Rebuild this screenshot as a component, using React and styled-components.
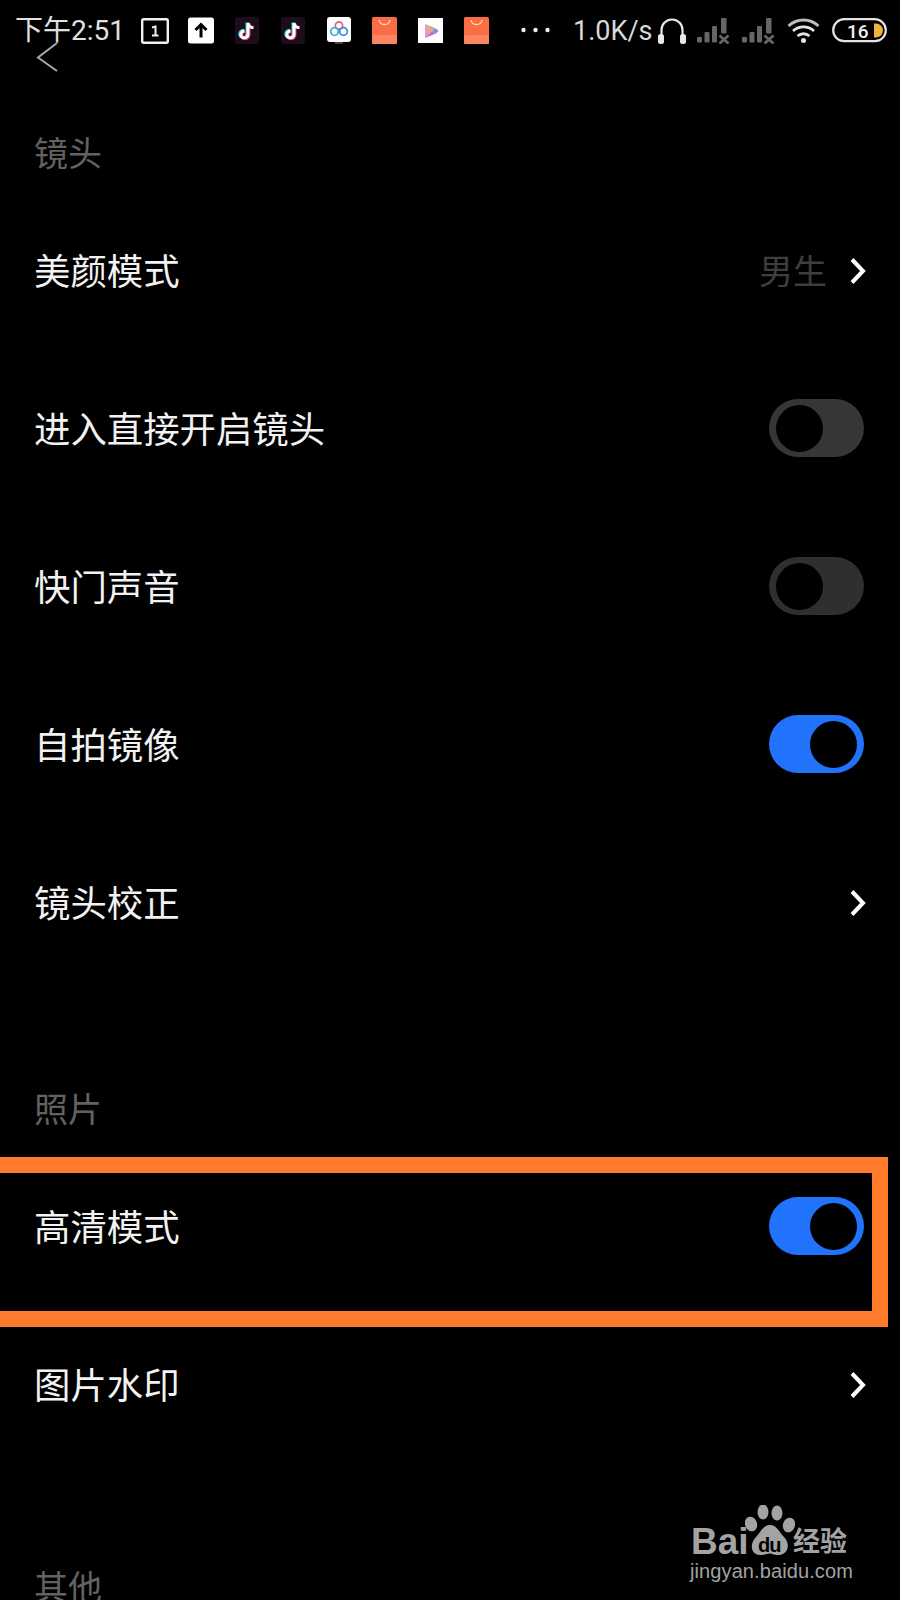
import React from 'react';
import styled, { createGlobalStyle } from 'styled-components';

const Global = createGlobalStyle`
  html, body { margin: 0; padding: 0; background: #000; }
  body { width: 900px; height: 1600px; overflow: hidden; font-family: "Roboto", "Noto Sans CJK SC", sans-serif; }
`;
const Page = styled.div`
  position: relative; width: 900px; height: 1600px; overflow: hidden; background: #000; color: #fff;
`;
const StatusBar = styled.div`
  display: flex; align-items: center; height: 60px; padding-left: 15px; color: #e4e4e4;
`;
const Clock = styled.span`
  font-size: 28px; line-height: 60px; width: 126px; margin-top: 2px; white-space: nowrap; color: #e0e0e0;
`;
const Tile = styled.svg`
  display: block; flex: none; width: ${p => p.$w || 26}px; height: 27px; margin-right: ${p => p.$mr ?? 20}px;
`;
const Speed = styled.span`
  font-size: 27px; line-height: 60px; width: 85px; margin-top: 2px; white-space: nowrap; color: #d8d8d8;
`;
const BackIcon = styled.svg`
  position: absolute; left: 36px; top: 40px; width: 24px; height: 34px;
`;
const SectionLabel = styled.div`
  font-size: 34px; line-height: 50px; color: #626262; padding-left: 34px; margin-top: ${p => p.$mt}px; margin-bottom: ${p => p.$mb}px;
`;
const Row = styled.div`
  position: relative; display: flex; align-items: center; justify-content: space-between; height: 158px; padding: 0 36px 0 34px;
`;
const RowTitle = styled.span`
  font-size: 36.4px; line-height: 50px; color: #f2f2f2; white-space: nowrap;
`;
const Trail = styled.div`
  display: flex; align-items: center; gap: 22px;
`;
const Value = styled.span`
  font-size: 34px; color: #3e3e3e; line-height: 50px; margin-top: -3px;
`;
const Chevron = styled.svg`
  display: block; width: 18px; height: 30px; margin: -5px -3px 0 0;
`;
const Track = styled.div`
  display: flex; align-items: center; justify-content: ${p => (p.$on ? 'flex-end' : 'flex-start')};
  width: 95px; height: 58px; box-sizing: border-box; padding: 0 7px; border-radius: 29px; margin-top: -6px;
  background: ${p => (p.$on ? '#2273fb' : p.$dim ? '#2f2f2f' : '#363636')};
`;
const Knob = styled.div`
  width: 47px; height: 47px; border-radius: 50%; background: #000;
`;
const Highlight = styled.div`
  position: absolute; left: -20px; top: 1157px; width: 908px; height: 170px; box-sizing: border-box;
  border: 16px solid #ff7a2b; pointer-events: none;
`;
const Watermark = styled.div`
  position: absolute; left: 690px; top: 1505px; width: 165px; height: 84px; color: #a3a3a3;
`;
const Paw = styled.svg`
  position: absolute; left: 55px; top: 0; width: 50px; height: 52px;
`;
const Bai = styled.span`
  position: absolute; left: 1px; top: 16px; font: bold 37px/42px "Liberation Sans", sans-serif;
`;
const Du = styled.span`
  position: absolute; left: 68px; top: 29px; font: bold 20px/22px "Liberation Sans", sans-serif; color: #000; letter-spacing: -1px;
`;
const Jingyan = styled.span`
  position: absolute; left: 103px; top: 17px; font: bold 27px/36px "Noto Sans CJK SC", sans-serif; white-space: nowrap;
`;
const Domain = styled.span`
  position: absolute; left: 0; top: 52px; font: 20px/28px "Liberation Sans", sans-serif; white-space: nowrap; letter-spacing: 0.1px;
`;

const Toggle = ({ on, dim }) => <Track $on={on} $dim={dim}><Knob /></Track>;
const Arrow = () => (
  <Chevron viewBox="0 0 18 30"><path d="M3 3.500 L14 15 L3 26.500" fill="none" stroke="#fff" strokeWidth="4" /></Chevron>
);
const TikTok = ({ mr }) => (
  <Tile $w={24} $mr={mr} viewBox="0 0 24 27">
    <rect width="24" height="27" rx="3" fill="#1c0c1c" />
    <path d="M13 6 V17.500 A3.600 3.600 0 1 1 9.400 13.900" fill="none" stroke="#27d8e0" strokeWidth="3.400" transform="translate(-.8 -.4)" />
    <path d="M13 6 V17.500 A3.600 3.600 0 1 1 9.400 13.900" fill="none" stroke="#f02a5c" strokeWidth="3.400" transform="translate(.8 .4)" />
    <path d="M13 6 V17.500 A3.600 3.600 0 1 1 9.400 13.900 M13 6 C13.600 9 15.500 10.500 18.500 10.800" fill="none" stroke="#fff" strokeWidth="3" />
  </Tile>
);
const Bag = ({ mr }) => (
  <Tile $w={25} $mr={mr} viewBox="0 0 25 27">
    <rect width="25" height="27" rx="1.500" fill="#fb6e45" />
    <rect y="18" width="25" height="9" rx="1.500" fill="#fb8560" />
    <path d="M7 3 C8 9 17 9 18 3" fill="none" stroke="#ffd9c8" strokeWidth="1.300" />
  </Tile>
);
const Signal = ({ mr }) => (
  <Tile $w={33} $mr={mr} viewBox="0 0 33 27">
    <g fill="#666">
      <rect x="0" y="20" width="5" height="5.500" rx="1" />
      <rect x="7.500" y="15" width="5" height="10.500" rx="1" />
      <rect x="15" y="9" width="5" height="16.500" rx="1" />
      <rect x="24" y="1" width="5.500" height="15.500" rx="1" />
    </g>
    <path d="M22.500 18.500 L31.500 26.500 M31.500 18.500 L22.500 26.500" stroke="#666" strokeWidth="2.800" />
  </Tile>
);

export default function App() {
  return (
    <Page>
      <Global />
      <StatusBar>
        <Clock>下午2:51</Clock>
        <Tile $w={28} $mr={19} viewBox="0 0 28 27">
          <rect x="1.200" y="2.200" width="25.600" height="23.600" rx="1.500" fill="none" stroke="#f0f0f0" strokeWidth="2.400" />
          <path d="M11 10.500 L14.500 9.500 V18.500 M11 18.500 H17.500" fill="none" stroke="#f0f0f0" strokeWidth="2" />
        </Tile>
        <Tile $w={26} $mr={21} viewBox="0 0 26 27">
          <rect width="26" height="26" y=".5" rx="2.500" fill="#fff" />
          <path d="M13 20.500 V8 M7.500 13 L13 7.500 L18.500 13" fill="none" stroke="#000" strokeWidth="3" />
        </Tile>
        <TikTok mr={22} />
        <TikTok mr={22} />
        <Tile $w={24} $mr={21} viewBox="0 0 24 27">
          <rect width="24" height="25" rx="3" fill="#fff" />
          <rect x="8" y="25" width="8" height="2" fill="#444" />
          <circle cx="12" cy="8.500" r="3.600" fill="none" stroke="#e75c7c" strokeWidth="1.700" />
          <circle cx="7.500" cy="14.500" r="3.800" fill="none" stroke="#3bb4d8" strokeWidth="1.800" />
          <circle cx="16.500" cy="14.500" r="3.800" fill="none" stroke="#3b8fd8" strokeWidth="1.800" />
        </Tile>
        <Bag mr={21} />
        <Tile $w={25} $mr={21} viewBox="0 0 25 27">
          <rect width="25" height="25" y="1" fill="#fdfdfd" />
          <path d="M7 7 L7 21 L14 14 Z" fill="#e89bb8" />
          <path d="M7 7 L14 14 L18 11.500 Z" fill="#d8a860" />
          <path d="M7 21 L14 14 L18 16.500 Z" fill="#c26ac8" />
          <path d="M14 14 L18 11.500 L20.500 14 L18 16.500 Z" fill="#7a8fe0" />
        </Tile>
        <Bag mr={32} />
        <Tile $w={29} $mr={23} viewBox="0 0 29 27">
          <g fill="#f0f0f0"><circle cx="2.500" cy="13" r="2.200" /><circle cx="14.500" cy="13" r="2.200" /><circle cx="26.500" cy="13" r="2.200" /></g>
        </Tile>
        <Speed>1.0K/s</Speed>
        <Tile $w={28} $mr={11} viewBox="0 0 28 27">
          <path d="M3.500 22 V13 A10.500 10.500 0 0 1 24.500 13 V22" fill="none" stroke="#e8e8e8" strokeWidth="2.200" />
          <rect x="0" y="17" width="6" height="10" rx="2.500" fill="#e8e8e8" />
          <rect x="22" y="17" width="6" height="10" rx="2.500" fill="#e8e8e8" />
        </Tile>
        <Signal mr={12} />
        <Signal mr={12} />
        <Tile $w={33} $mr={12} viewBox="0 0 33 27">
          <g fill="none" stroke="#e4e4e4" strokeWidth="2.800">
            <path d="M1.500 9 C10 1 23 1 31.500 9" stroke="#bdbdbd" />
            <path d="M6 14 C12 8.500 21 8.500 27 14" />
            <path d="M10.500 19 C14 16 19 16 22.500 19" />
          </g>
          <circle cx="16.500" cy="23.500" r="2.500" fill="#e4e4e4" />
        </Tile>
        <Tile $w={55} $mr={0} viewBox="0 0 55 27">
          <rect x="1.200" y="2.200" width="52.600" height="22" rx="11" fill="none" stroke="#e4e4e4" strokeWidth="2.200" />
          <path d="M42 6.500 H44 A7 7 0 0 1 44 20.500 H42 Z" fill="#f0b23c" />
          <text x="15" y="21" fontFamily="Roboto, sans-serif" fontSize="19" fontWeight="500" fill="#f0f0f0">16</text>
        </Tile>
      </StatusBar>
      <BackIcon viewBox="0 0 24 34">
        <path d="M21 3 L2 17.500 L21 31" fill="none" stroke="#a8a8a8" strokeWidth="2" />
      </BackIcon>
      <SectionLabel $mt={69} $mb={15}>镜头</SectionLabel>
      <Row><RowTitle>美颜模式</RowTitle><Trail><Value>男生</Value><Arrow /></Trail></Row>
      <Row><RowTitle>进入直接开启镜头</RowTitle><Toggle /></Row>
      <Row><RowTitle>快门声音</RowTitle><Toggle dim /></Row>
      <Row><RowTitle>自拍镜像</RowTitle><Toggle on /></Row>
      <Row><RowTitle>镜头校正</RowTitle><Arrow /></Row>
      <SectionLabel $mt={101} $mb={15}>照片</SectionLabel>
      <Row><RowTitle>高清模式</RowTitle><Toggle on /></Row>
      <Row><RowTitle>图片水印</RowTitle><Arrow /></Row>
      <SectionLabel $mt={97} $mb={0}>其他</SectionLabel>
      <Highlight />
      <Watermark>
        <Bai>Bai</Bai>
        <Paw viewBox="0 0 50 52">
          <g fill="#a3a3a3">
            <ellipse cx="6" cy="19" rx="6" ry="7.500" transform="rotate(-20 6 19)" />
            <ellipse cx="18" cy="7" rx="5.500" ry="7.500" />
            <ellipse cx="32" cy="8" rx="5.500" ry="7.500" />
            <ellipse cx="44" cy="20" rx="6" ry="7.500" transform="rotate(20 44 20)" />
            <path d="M25 20 C32 20 34 27 39 32 C46 39 43 50 33 50 C28 50 27 48.500 25 48.500 C22 48.500 21 50 15 50 C6 50 4 39 11 32 C16 27 18 20 25 20 Z" />
          </g>
        </Paw>
        <Du>du</Du>
        <Jingyan>经验</Jingyan>
        <Domain>jingyan.baidu.com</Domain>
      </Watermark>
    </Page>
  );
}
